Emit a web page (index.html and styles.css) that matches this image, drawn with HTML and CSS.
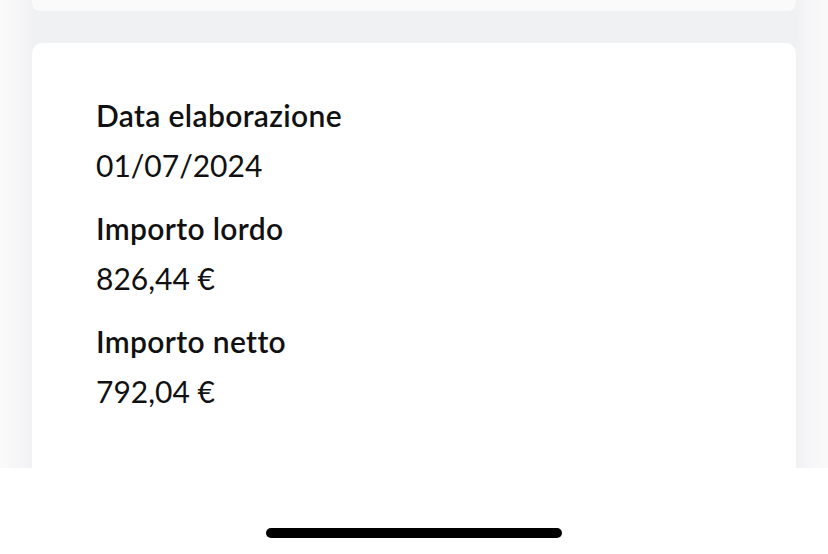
FILE: index.html
```html
<!DOCTYPE html>
<html lang="it">
<head>
    <meta charset="UTF-8">
    <meta name="viewport" content="width=device-width, initial-scale=1.0">
    <title>Dettaglio pagamento</title>
    <link rel="stylesheet" href="styles.css">
</head>
<body>
    <main class="screen">
        <div class="side side-left"></div>
        <section class="column">
            <div class="card card-prev"></div>
            <div class="card card-detail">
                <div class="field">
                    <h3 class="label">Data elaborazione</h3>
                    <p class="value">01/07/2024</p>
                </div>
                <div class="field">
                    <h3 class="label">Importo lordo</h3>
                    <p class="value">826,44 €</p>
                </div>
                <div class="field">
                    <h3 class="label">Importo netto</h3>
                    <p class="value">792,04 €</p>
                </div>
            </div>
        </section>
        <div class="side side-right"></div>
    </main>
    <footer class="home-bar">
        <span class="home-indicator"></span>
    </footer>
</body>
</html>
```

FILE: styles.css
```css
body {
    margin: 0;
    padding: 0;
    background-color: #fff;
    font-family: Lato, "Open Sans", sans-serif;
    color: #111;
}
.screen {
    display: flex;
    height: 468px;
    overflow: hidden;
}
.side {
    width: 32px;
    flex-shrink: 0;
}
.side-left {
    background: linear-gradient(to right, #fafafb, #f5f5f7 70%, #f1f1f3);
}
.side-right {
    background: linear-gradient(to left, #fafafb, #f5f5f7 70%, #f1f1f3);
}
.column {
    flex: 1;
    display: flex;
    flex-direction: column;
    gap: 32px;
    background-color: #f0f1f3;
}
.card {
    background-color: #fff;
}
.card-prev {
    height: 11px;
    background-color: #fafafb;
    border-radius: 0 0 8px 8px;
}
.card-detail {
    flex: 1;
    border-radius: 10px 10px 0 0;
    padding: 54px 64px 0;
}
.field {
    margin-bottom: 27px;
}
.label {
    margin: 0 0 14px;
    font-size: 30px;
    line-height: 36px;
    font-weight: 600;
    letter-spacing: 0.35px;
}
.value {
    margin: 0;
    font-size: 30px;
    line-height: 36px;
    font-weight: 400;
}
.home-bar {
    height: 86px;
    display: flex;
    justify-content: center;
    align-items: flex-end;
    padding-bottom: 16px;
    box-sizing: border-box;
}
.home-indicator {
    width: 296px;
    height: 10px;
    border-radius: 5px;
    background-color: #000;
}
```
